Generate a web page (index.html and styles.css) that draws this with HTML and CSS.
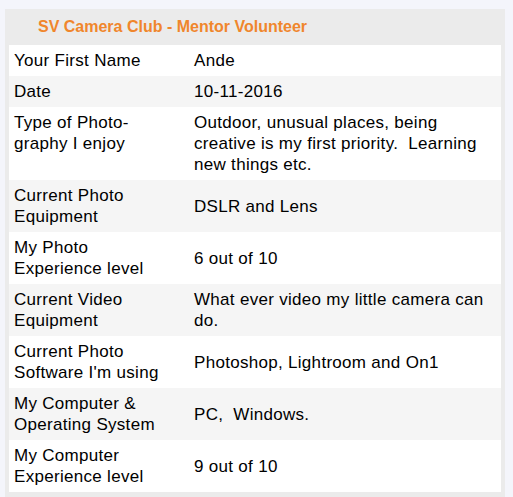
FILE: index.html
```html
<!DOCTYPE html>
<html>
<head>
<meta charset="utf-8">
<link rel="stylesheet" href="styles.css">
</head>
<body>
<div class="panel">
  <div class="title">SV Camera Club - Mentor Volunteer</div>
  <table class="form">
    <tr><td class="lbl">Your First Name</td><td class="val">Ande</td></tr>
    <tr><td class="lbl">Date</td><td class="val">10-11-2016</td></tr>
    <tr><td class="lbl">Type of Photo-<br>graphy I enjoy</td><td class="val">Outdoor, unusual places, being<br>creative is my first priority.&nbsp; Learning<br>new things etc.</td></tr>
    <tr><td class="lbl">Current Photo<br>Equipment</td><td class="val">DSLR and Lens</td></tr>
    <tr><td class="lbl">My Photo<br>Experience level</td><td class="val">6 out of 10</td></tr>
    <tr><td class="lbl">Current Video<br>Equipment</td><td class="val">What ever video my little camera can<br>do.</td></tr>
    <tr><td class="lbl">Current Photo<br>Software I'm using</td><td class="val">Photoshop, Lightroom and On1</td></tr>
    <tr><td class="lbl">My Computer &amp;<br>Operating System</td><td class="val">PC,&nbsp; Windows.</td></tr>
    <tr><td class="lbl">My Computer<br>Experience level</td><td class="val">9 out of 10</td></tr>
  </table>
</div>
</body>
</html>
```
FILE: styles.css
```css
html, body {
  margin: 0;
  padding: 0;
  background: #f4f5fb;
}
body {
  padding: 9px 0 0 5px;
  font-family: "Liberation Sans", Arial, sans-serif;
  color: #000;
}
.panel {
  width: 492px;
  background: #ebebeb;
  padding: 0 4px 6px 4px;
}
.title {
  height: 36px;
  box-sizing: border-box;
  padding: 9px 0 0 29px;
  font-size: 16px;
  line-height: 18px;
  font-weight: bold;
  color: #f0862c;
}
.form {
  width: 492px;
  border-collapse: collapse;
  border-spacing: 0;
  font-size: 17px;
  line-height: 21px;
  letter-spacing: 0.3px;
}
.form td {
  padding-top: 5px;
  padding-bottom: 5px;
}
.form tr:nth-child(odd) { background: #ffffff; }
.form tr:nth-child(even) { background: #f5f5f5; }
.lbl {
  width: 180px;
  padding-left: 5px;
  padding-right: 0;
  white-space: nowrap;
  vertical-align: top;
}
.val {
  padding-left: 0;
  padding-right: 5px;
  white-space: nowrap;
  vertical-align: middle;
}
```
